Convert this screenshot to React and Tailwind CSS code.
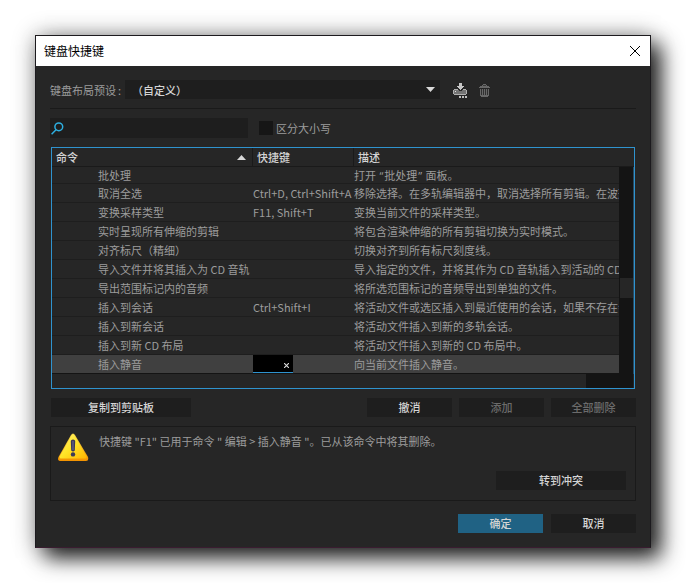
import clsx from 'clsx'

const commands = [
  {
    name: '批处理',
    keys: '',
    desc: (
      <>
        打开 <Quote>“</Quote>批处理<Quote>”</Quote> 面板。
      </>
    ),
  },
  { name: '取消全选', keys: 'Ctrl+D, Ctrl+Shift+A', desc: '移除选择。在多轨编辑器中，取消选择所有剪辑。在波形' },
  { name: '变换采样类型', keys: 'F11, Shift+T', desc: '变换当前文件的采样类型。' },
  { name: '实时呈现所有伸缩的剪辑', keys: '', desc: '将包含渲染伸缩的所有剪辑切换为实时模式。' },
  { name: '对齐标尺（精细）', keys: '', desc: '切换对齐到所有标尺刻度线。' },
  { name: '导入文件并将其插入为 CD 音轨', keys: '', desc: '导入指定的文件，并将其作为 CD 音轨插入到活动的 CD' },
  { name: '导出范围标记内的音频', keys: '', desc: '将所选范围标记的音频导出到单独的文件。' },
  { name: '插入到会话', keys: 'Ctrl+Shift+I', desc: '将活动文件或选区插入到最近使用的会话，如果不存在会' },
  { name: '插入到新会话', keys: '', desc: '将活动文件插入到新的多轨会话。' },
  { name: '插入到新 CD 布局', keys: '', desc: '将活动文件插入到新的 CD 布局中。' },
  { name: '插入静音', keys: '', desc: '向当前文件插入静音。', selected: true },
]

function Quote({ children }) {
  return <span className="px-px font-['Open_Sans',sans-serif] leading-none">{children}</span>
}

function Button({ className, children, disabled, primary }) {
  return (
    <button
      disabled={disabled}
      className={clsx(
        'h-[19px] shrink-0 text-center leading-[19px] font-medium',
        primary ? 'bg-[#206284]' : 'bg-[#1e1e1e]',
        disabled ? 'text-[#6b6b6b]' : 'text-[#d4d4d4]',
        className
      )}
    >
      {children}
    </button>
  )
}

function SaveIcon() {
  return (
    <svg width="15" height="17" viewBox="0 0 15 17" shapeRendering="crispEdges">
      <path d="M1 8h12v1h1v4h-1v1H1v-1H0V9h1z" fill="#b0b0b0" />
      <path d="M1 9h12v4H1z" fill="#747474" />
      <path d="M2 10h1v1H2z" fill="#e0e0e0" />
      <path d="M3 5h9v2h-1v1h-1v1H9v1H6V9H5V8H4V7H3z" fill="#262626" />
      <path d="M6 2h3v3h2v1h-1v1H9v1H8v1H7V8H6V7H5V6H4V5h2z" fill="#c6c6c6" />
      <path d="M6 15h2v2H6zM9 15h2v2H9zM12 15h2v2h-2z" fill="#c0c0c0" />
    </svg>
  )
}

function TrashIcon() {
  return (
    <svg className="mt-0.5" width="11" height="13" viewBox="0 0 11 13" shapeRendering="crispEdges" fill="#686868">
      <path d="M3 1h1V0h3v1h1v1h2v1h1v1H0V3h1V2h2z" />
      <path d="M4 1h3v1H4z" fill="#3a3a3a" />
      <path d="M1 5h9v7H9v1H2v-1H1z" />
      <path d="M2 5h1v6H2zM4 5h1v6H4zM6 5h1v6H6zM8 5h1v6H8z" fill="#303030" />
    </svg>
  )
}

function WarningIcon() {
  return (
    <svg width="32" height="29" viewBox="0 0 32 29">
      <defs>
        <linearGradient id="warn" x1="0" y1="0" x2="1" y2="1">
          <stop offset="0" stopColor="#fff27a" />
          <stop offset="0.5" stopColor="#ffe426" />
          <stop offset="1" stopColor="#ffb400" />
        </linearGradient>
        <linearGradient id="edge" x1="0" y1="0" x2="0" y2="1">
          <stop offset="0" stopColor="#f5d84a" />
          <stop offset="1" stopColor="#f39200" />
        </linearGradient>
      </defs>
      <path d="M13 2Q15 -1 17 2L30 24Q31 28 28 28H3Q-1 28 0.5 24Z" fill="url(#edge)" />
      <path d="M13.4 2.8Q15 0.4 16.6 2.8L28.6 23.4Q29 25.6 27 25.6H3Q1 25.6 1.6 23.4Z" fill="url(#warn)" />
      <path d="M12.8 8Q12.8 6.4 15 6.4T17.2 8L16.8 17.5Q15 19.4 13.2 17.5Z" fill="#3c3a58" />
      <path d="M15 8V17" stroke="#7c7ca4" strokeWidth="0.8" />
      <circle cx="15" cy="21.4" r="2.2" fill="#3c3a58" />
    </svg>
  )
}

function TitleBar() {
  return (
    <div className="flex h-[30px] items-center justify-between bg-white pr-[9px] pl-2 text-xs text-black">
      <span>键盘快捷键</span>
      <svg width="12" height="12" viewBox="0 0 12 12" stroke="#000" strokeWidth="1">
        <path d="M1 1l10 10M11 1L1 11" />
      </svg>
    </div>
  )
}

function CommandTable() {
  return (
    <div className="mt-[9px] ml-px h-[242px] w-[584px] border border-[#2f93cf]">
      <div className="flex h-[19px] border-b border-[#1a1a1a] leading-[18px] font-medium text-[#d4d4d4]">
        <div className="flex w-[201px] items-center justify-between border-r border-[#1a1a1a] pr-[6px] pl-1">
          <span>命令</span>
          <svg width="9" height="5" viewBox="0 0 9 5" fill="#d8d8d8">
            <path d="M4.5 0L9 5H0z" />
          </svg>
        </div>
        <div className="w-[101px] border-r border-[#1a1a1a] pl-1">快捷键</div>
        <div className="pl-1">描述</div>
      </div>
      <div className="flex h-[207px]">
        <div className="w-[567px] overflow-hidden text-[#9c9c9c]">
          {commands.map((c) => (
            <div
              key={c.name}
              className={clsx(
                'flex h-[19px] border-b leading-[18px] whitespace-nowrap first:h-[17px] first:leading-4',
                c.selected ? 'border-[#141414] bg-[#404040]' : 'border-[#1e1e1e]'
              )}
            >
              <div className="w-[201px] shrink-0 pl-[46px]">{c.name}</div>
              <div className="w-[101px] shrink-0">
                {c.selected ? (
                  <div className="flex h-[18px] w-10 items-center justify-end border-b border-[#2f93cf] bg-black pt-[3px] pr-1">
                    <svg width="5" height="5" viewBox="0 0 5 5" stroke="#ddd" strokeWidth="1.1">
                      <path d="M0 0l5 5M5 0L0 5" />
                    </svg>
                  </div>
                ) : (
                  c.keys
                )}
              </div>
              <div className="shrink-0">{c.desc}</div>
            </div>
          ))}
        </div>
        <div className="w-[14px] bg-[#141414] pt-[111px] pl-px">
          <div className="h-5 bg-[#262626]" />
        </div>
        <div className="w-px bg-[#2a4a60]" />
      </div>
      <div className="flex h-[14px]">
        <div className="w-[534px]" />
        <div className="w-[47px] bg-[#141414]" />
      </div>
    </div>
  )
}

export default function App() {
  return (
    <div className="h-[583px] w-[686px] overflow-hidden bg-white pt-[35px] pl-[35px] font-['Noto_Sans_CJK_SC',sans-serif] text-[11px]">
      <div className="h-[513px] w-[616px] border border-[#1c1a1e] border-b-[#3a1c30] bg-[#262626] shadow-[10px_10px_20px_rgba(0,0,0,0.85),0_0_22px_rgba(0,0,0,0.32)]">
        <TitleBar />
        <div className="px-[14px] pt-[14px]">
          <div className="flex h-[19px] items-center text-[#9c9c9c]">
            <span className="w-[75px] pt-px whitespace-nowrap">
              键盘布局预设<span className="pl-[2px]">:</span>
            </span>
            <div className="flex h-[19px] w-[315px] items-center justify-between bg-[#1e1e1e] pr-[5px] pl-[7px] font-medium text-[#d4d4d4]">
              <span className="pt-px">（自定义）</span>
              <svg width="9" height="5" viewBox="0 0 9 5" fill="#d8d8d8">
                <path d="M0 0h9L4.5 5z" />
              </svg>
            </div>
            <div className="flex items-center gap-[11px] pl-[13px]">
              <SaveIcon />
              <TrashIcon />
            </div>
          </div>
          <div className="mt-[9px] h-px w-[586px] bg-[#1a1a1a]" />
          <div className="mt-[9px] flex h-5 items-center">
            <div className="flex h-5 w-[198px] items-center bg-[#1e1e1e] pl-px">
              <svg width="13" height="13" viewBox="0 0 13 13" fill="none" stroke="#2eafe0" strokeWidth="1.5">
                <circle cx="7.8" cy="4.8" r="3.9" />
                <path d="M5 7.8L0.6 12.2" />
              </svg>
            </div>
            <div className="ml-[11px] size-[14px] bg-[#161616]" />
            <span className="pl-[3px] text-[#9c9c9c]">区分大小写</span>
          </div>
          <CommandTable />
          <div className="mt-[9px] flex w-[586px] pl-px">
            <Button className="mr-auto w-[140px]">复制到剪贴板</Button>
            <div className="flex gap-[7px]">
              <Button className="w-[85px]">撤消</Button>
              <Button className="w-[85px]" disabled>添加</Button>
              <Button className="w-[85px]" disabled>全部删除</Button>
            </div>
          </div>
          <div className="mt-[9px] flex h-[75px] w-[586px] flex-col justify-between border border-[#1a1a1a] pt-[6px] pr-[9px] pb-[10px] pl-[7px]">
            <div className="flex h-[29px] gap-[9px]">
              <WarningIcon />
              <p className="leading-4 whitespace-pre text-[#9c9c9c]">
                快捷键 "F1" 已用于命令 " 编辑 &gt; 插入静音 "。已从该命令中将其删除。
              </p>
            </div>
            <Button className="w-[130px] self-end">转到冲突</Button>
          </div>
          <div className="mt-[13px] flex w-[586px] justify-end gap-2">
            <Button className="w-[85px]" primary>确定</Button>
            <Button className="w-[85px]">取消</Button>
          </div>
        </div>
      </div>
    </div>
  )
}
